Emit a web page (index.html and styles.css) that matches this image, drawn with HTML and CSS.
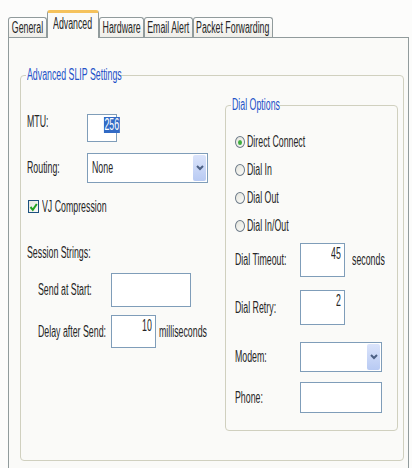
FILE: index.html
```html
<!DOCTYPE html>
<html lang="en">
<head>
  <meta charset="UTF-8">
  <meta name="viewport" content="width=device-width, initial-scale=1.0">
  <title>Advanced Settings</title>
  <link rel="stylesheet" href="styles.css">
</head>
<body>
  <div class="tabs">
    <div class="tab tab-general"><span class="t">General</span></div>
    <div class="tab tab-advanced active"><span class="t">Advanced</span></div>
    <div class="tab tab-hardware"><span class="t">Hardware</span></div>
    <div class="tab tab-email"><span class="t">Email Alert</span></div>
    <div class="tab tab-packet"><span class="t">Packet Forwarding</span></div>
  </div>

  <div class="panel">
    <fieldset class="group slip">
      <legend><span class="t">Advanced SLIP Settings</span></legend>
      <div class="slip-body">

        <div class="left-col">
          <div class="row mtu-row">
            <span class="lbl"><span class="t">MTU:</span></span>
            <div class="field mtu"><span class="t sel">256</span></div>
          </div>
          <div class="row routing-row">
            <span class="lbl"><span class="t">Routing:</span></span>
            <div class="combo routing">
              <span class="combo-text"><span class="t">None</span></span>
              <span class="combo-btn">
                <svg width="8" height="6" viewBox="0 0 8 6"><polyline points="1,1 4,4 7,1" fill="none" stroke="#4d6185" stroke-width="2"/></svg>
              </span>
            </div>
          </div>
          <div class="row check-row">
            <span class="checkbox">
              <svg width="9" height="10" viewBox="0 0 9 10"><path d="M1.5 5 L3.8 7.8 L7.8 2" fill="none" stroke="#21a121" stroke-width="2"/></svg>
            </span>
            <span class="t">VJ Compression</span>
          </div>
          <div class="session-title"><span class="t">Session Strings:</span></div>
          <div class="row start-row">
            <span class="lbl-sub"><span class="t">Send at Start:</span></span>
            <div class="field start"></div>
          </div>
          <div class="row delay-row">
            <span class="lbl-sub"><span class="t">Delay after Send:</span></span>
            <div class="field delay"><span class="t">10</span></div>
            <span class="t unit">milliseconds</span>
          </div>
        </div>

        <fieldset class="group dial">
          <legend><span class="t">Dial Options</span></legend>
          <div class="row radio-row"><span class="radio on"></span><span class="t">Direct Connect</span></div>
          <div class="row radio-row"><span class="radio"></span><span class="t">Dial In</span></div>
          <div class="row radio-row"><span class="radio"></span><span class="t">Dial Out</span></div>
          <div class="row radio-row"><span class="radio"></span><span class="t">Dial In/Out</span></div>
          <div class="row timeout-row">
            <span class="lbl-dial"><span class="t">Dial Timeout:</span></span>
            <div class="field short"><span class="t">45</span></div>
            <span class="t unit-sec">seconds</span>
          </div>
          <div class="row retry-row">
            <span class="lbl-dial"><span class="t">Dial Retry:</span></span>
            <div class="field short"><span class="t">2</span></div>
          </div>
          <div class="row modem-row">
            <span class="lbl-dial"><span class="t">Modem:</span></span>
            <div class="combo modem">
              <span class="combo-text"></span>
              <span class="combo-btn">
                <svg width="8" height="6" viewBox="0 0 8 6"><polyline points="1,1 4,4 7,1" fill="none" stroke="#4d6185" stroke-width="2"/></svg>
              </span>
            </div>
          </div>
          <div class="row phone-row">
            <span class="lbl-dial"><span class="t">Phone:</span></span>
            <div class="field phone"></div>
          </div>
        </fieldset>

      </div>
    </fieldset>
  </div>
</body>
</html>
```

FILE: styles.css
```css
* {
  margin: 0;
  padding: 0;
  box-sizing: border-box;
}

body {
  background: #fcfcfb;
  font-family: "Liberation Sans", Arial, sans-serif;
  font-size: 16px;
  line-height: 16px;
  color: #262626;
}

/* the dialog font is very narrow, so each label is squeezed */
.t {
  display: inline-block;
  transform: scaleX(0.55);
  transform-origin: 0 50%;
  white-space: nowrap;
}

/* tab strip */
.tabs {
  display: flex;
  align-items: flex-end;
  height: 37px;
  padding-left: 8px;
}

.tab {
  height: 20px;
  border: 1px solid #919b9c;
  border-bottom: none;
  border-radius: 3px 3px 0 0;
  background: linear-gradient(#fefefe, #efeee9);
  text-align: center;
  line-height: 19px;
  white-space: nowrap;
  overflow: hidden;
}

.tab .t {
  transform-origin: 50% 50%;
  margin: 0 -40px;
}

.tab-general { width: 39px; }
.tab-advanced { width: 52px; }
.tab-hardware { width: 45px; }
.tab-email { width: 49px; }
.tab-packet { width: 80px; }

.tab.active {
  height: 28px;
  margin-bottom: -1px;
  position: relative;
  z-index: 1;
  background: #fafaf8;
  border-top: 3px solid #f5c25c;
  line-height: 21px;
}

.panel {
  width: 401px;
  height: 440px;
  margin-left: 8px;
  border: 1px solid #919b9c;
  background: #fafaf8;
  padding: 29px 0 0 11px;
}

/* group boxes */
.group {
  border: 1px solid #d0d0bf;
  border-radius: 4px;
  min-width: 0;
}

.group legend {
  color: #2452c8;
  padding: 0 1px;
  line-height: 16px;
  white-space: nowrap;
}

.slip {
  width: 384px;
  height: 394px;
  padding: 0 5px 0 6px;
}

.slip legend {
  width: 95px;
  margin-left: -1px;
}

.slip-body {
  display: flex;
  align-items: flex-start;
}

.left-col {
  width: 198px;
}

.dial {
  width: 173px;
  margin-top: 14px;
  padding: 15px 0 17px 9px;
}

.dial legend {
  width: 49px;
  margin-left: -4px;
}

/* rows */
.row {
  display: flex;
  align-items: center;
  white-space: nowrap;
}

.row > * {
  flex-shrink: 0;
}

.lbl { width: 60px; }
.lbl-sub { width: 73px; }
.lbl-dial { width: 65px; }

.mtu-row {
  height: 28px;
  margin-top: 31px;
  align-items: flex-start;
}

.routing-row {
  height: 30px;
  margin-top: 11px;
}

.check-row {
  height: 13px;
  margin-top: 17px;
}

.session-title {
  margin-top: 32px;
}

.start-row {
  height: 34px;
  margin-top: 12px;
  padding-left: 11px;
}

.delay-row {
  height: 33px;
  margin-top: 8px;
  padding-left: 11px;
}

.radio-row { height: 28px; }

.timeout-row {
  height: 34px;
  margin-top: 3px;
}

.retry-row {
  height: 35px;
  margin-top: 13px;
}

.modem-row {
  height: 30px;
  margin-top: 17px;
}

.phone-row {
  height: 31px;
  margin-top: 10px;
}

/* controls */
.field {
  height: 100%;
  border: 1px solid #7f9db9;
  background: #fff;
  text-align: right;
  padding: 2px 3px 0;
}

.field .t {
  transform-origin: 100% 50%;
}

.mtu { width: 30px; padding-right: 1px; }
.start { width: 80px; }
.delay { width: 45px; }
.short { width: 45px; }
.phone { width: 82px; }

.sel {
  background: #316ac5;
  color: #fff;
  padding: 0 1px;
}

.unit { margin-left: 3px; }
.unit-sec { margin-left: 7px; }

.combo {
  display: flex;
  height: 100%;
  border: 1px solid #7f9db9;
  background: #fff;
  align-items: center;
}

.routing { width: 121px; }
.modem { width: 82px; }

.combo-text {
  flex: 1;
  padding-left: 4px;
  overflow: hidden;
}

.combo-btn {
  width: 13px;
  align-self: stretch;
  margin: 1px;
  border-radius: 2px;
  background: linear-gradient(#dbe4fb, #b8caf3);
  display: flex;
  align-items: center;
  justify-content: center;
}

.checkbox {
  width: 11px;
  height: 13px;
  margin: 0 3px 0 1px;
  border: 1px solid #1c5180;
  background: linear-gradient(135deg, #e6e6de, #fbfbf9);
  display: flex;
  align-items: center;
  justify-content: center;
}

.radio {
  width: 10px;
  height: 12px;
  margin-right: 2px;
  border: 1px solid #6c7a88;
  border-radius: 50%;
  background: linear-gradient(135deg, #e4e4dc, #fbfbf9);
  display: flex;
  align-items: center;
  justify-content: center;
}

.radio.on::after {
  content: '';
  width: 4px;
  height: 5px;
  border-radius: 50%;
  background: #3fae3f;
}
```
